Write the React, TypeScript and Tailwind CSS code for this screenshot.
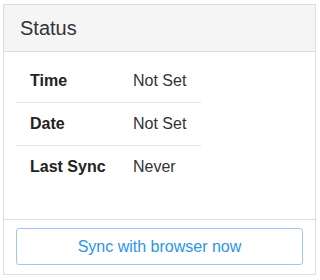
import React from "react";

const rows = [
  { label: "Time", value: "Not Set" },
  { label: "Date", value: "Not Set" },
  { label: "Last Sync", value: "Never" },
];

export default function App() {
  return (
    <div
      className="w-[320px] h-[280px] bg-white pt-[4px] pl-[3px]"
      style={{ fontFamily: '"Liberation Sans", Arial, sans-serif' }}
    >
      <div className="w-[313px] h-[271px] border border-[#dddddd] flex flex-col">
        <div className="h-[47px] bg-[#f5f5f5] border-b border-[#dddddd] flex items-center pl-[16px] text-[20px] text-[#333333]">
          Status
        </div>
        <div className="flex-1 pt-[7px] pl-[12px]">
          <div className="w-[185px]">
            {rows.map((r, i) => (
              <div
                key={r.label}
                className={`flex items-center h-[43px] text-[16px] ${i > 0 ? "border-t border-[#e3e3e3]" : ""}`}
              >
                <div className="w-[117px] pl-[14px] font-bold text-[#222222]">{r.label}</div>
                <div className="text-[#333333]">{r.value}</div>
              </div>
            ))}
          </div>
        </div>
        <div className="h-[55px] border-t border-[#dddddd] px-[12px] pt-[8px]">
          <button className="w-[287px] h-[37px] border border-[#9cc8f3] rounded-[3px] text-[#2b95e9] text-[16px] flex items-center justify-center bg-white">
            Sync with browser now
          </button>
        </div>
      </div>
    </div>
  );
}
